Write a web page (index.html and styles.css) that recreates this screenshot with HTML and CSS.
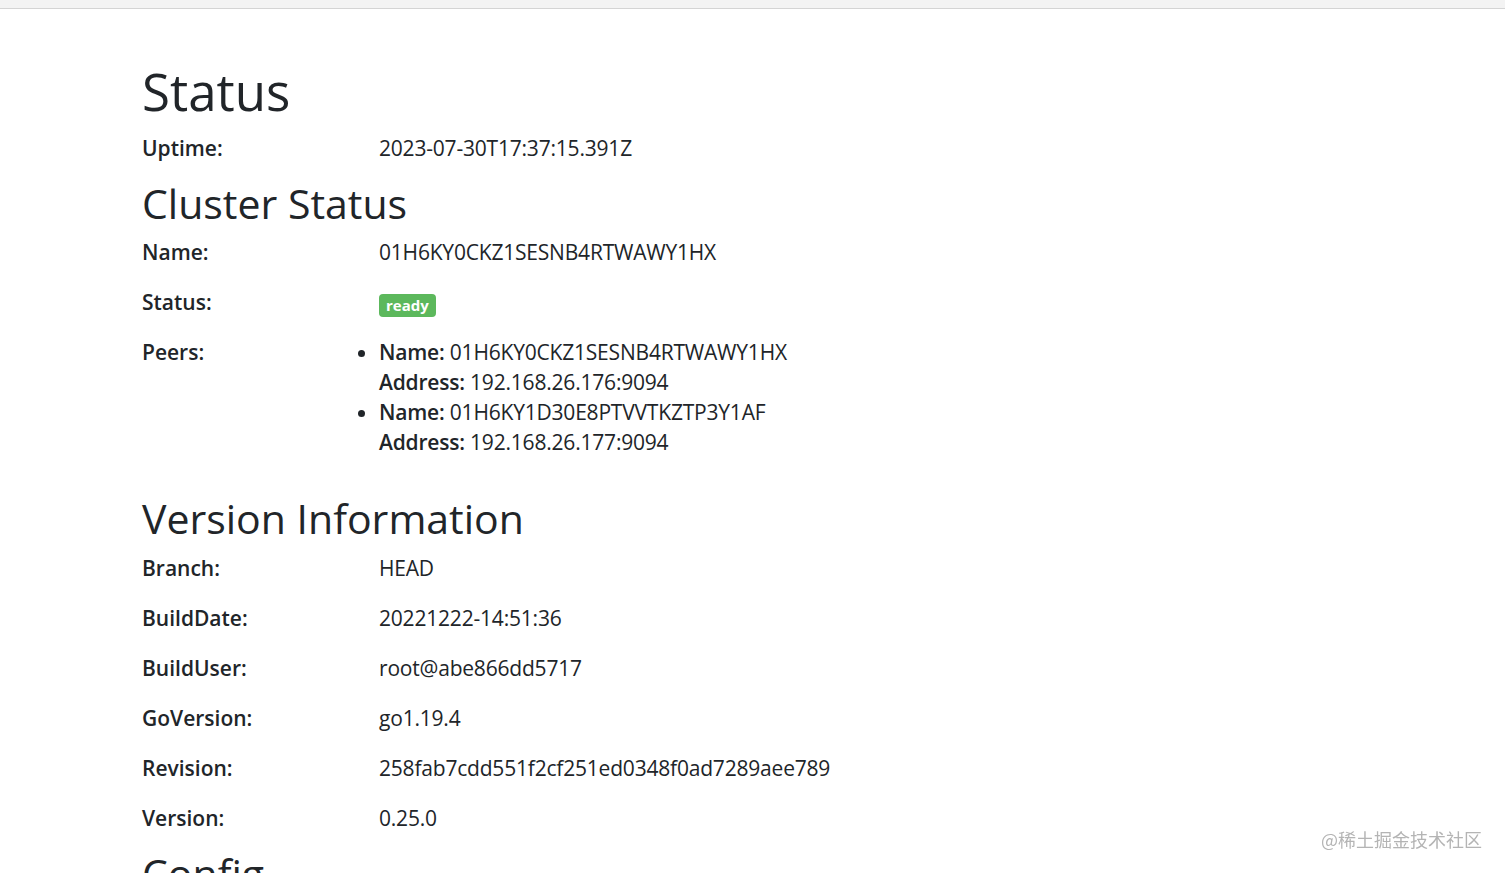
FILE: index.html
```html
<!DOCTYPE html>
<html lang="en">
<head>
<meta charset="utf-8">
<title>Alertmanager Status</title>
<link rel="stylesheet" href="styles.css">
</head>
<body>
<div class="topbar"></div>
<main class="container">
  <h1 class="page-title">Status</h1>
  <div class="row"><div class="label">Uptime:</div><div class="value">2023-07-30T17:37:15.391Z</div></div>

  <h2 class="section-title">Cluster Status</h2>
  <div class="row"><div class="label">Name:</div><div class="value">01H6KY0CKZ1SESNB4RTWAWY1HX</div></div>
  <div class="row"><div class="label">Status:</div><div class="value"><span class="badge">ready</span></div></div>
  <div class="row"><div class="label">Peers:</div>
    <div class="value">
      <ul class="peers">
        <li><div><b>Name:</b> 01H6KY0CKZ1SESNB4RTWAWY1HX</div><div><b>Address:</b> 192.168.26.176:9094</div></li>
        <li><div><b>Name:</b> 01H6KY1D30E8PTVVTKZTP3Y1AF</div><div><b>Address:</b> 192.168.26.177:9094</div></li>
      </ul>
    </div>
  </div>

  <h2 class="section-title">Version Information</h2>
  <div class="row"><div class="label">Branch:</div><div class="value">HEAD</div></div>
  <div class="row"><div class="label">BuildDate:</div><div class="value">20221222-14:51:36</div></div>
  <div class="row"><div class="label">BuildUser:</div><div class="value">root@abe866dd5717</div></div>
  <div class="row"><div class="label">GoVersion:</div><div class="value">go1.19.4</div></div>
  <div class="row"><div class="label">Revision:</div><div class="value">258fab7cdd551f2cf251ed0348f0ad7289aee789</div></div>
  <div class="row"><div class="label">Version:</div><div class="value">0.25.0</div></div>

  <h2 class="section-title">Config</h2>
</main>
<div class="watermark">@稀土掘金技术社区</div>
</body>
</html>
```
FILE: styles.css
```css
html, body {
  margin: 0;
  padding: 0;
  background: #ffffff;
  overflow: hidden;
  height: 873px;
}
body {
  font-family: "Open Sans", "Noto Sans", sans-serif;
  font-size: 21px;
  line-height: 30px;
  color: #212529;
}
.topbar {
  height: 8px;
  background: #f3f3f3;
  border-bottom: 1px solid #d4d4d4;
}
.container {
  padding-left: 142px;
}
.page-title {
  font-size: 51px;
  font-weight: 400;
  line-height: 1.2;
  margin: 52px 0 11px;
}
.section-title {
  font-size: 41px;
  font-weight: 400;
  line-height: 1.2;
  margin: 16px 0 9px;
}
.row {
  display: grid;
  grid-template-columns: 237px 1fr;
  margin-bottom: 20px;
}
.row:has(+ .section-title) { margin-bottom: 0; }
.label { font-weight: 600; }
.value { letter-spacing: -0.2px; }
.badge {
  display: inline-block;
  background: #5cb85c;
  color: #fff;
  font-size: 15px;
  font-weight: 700;
  line-height: 23px;
  padding: 0 7px;
  border-radius: 4px;
  vertical-align: -1px;
  letter-spacing: 0;
}
.peers {
  margin: 0 0 21px;
  padding: 0;
  list-style: disc;
}
.peers b { font-weight: 600; }
.watermark {
  position: fixed;
  right: 23px;
  bottom: 22px;
  font-family: "Noto Sans CJK SC", sans-serif;
  font-size: 18px;
  line-height: 24px;
  color: #b4b4b4;
}
```
